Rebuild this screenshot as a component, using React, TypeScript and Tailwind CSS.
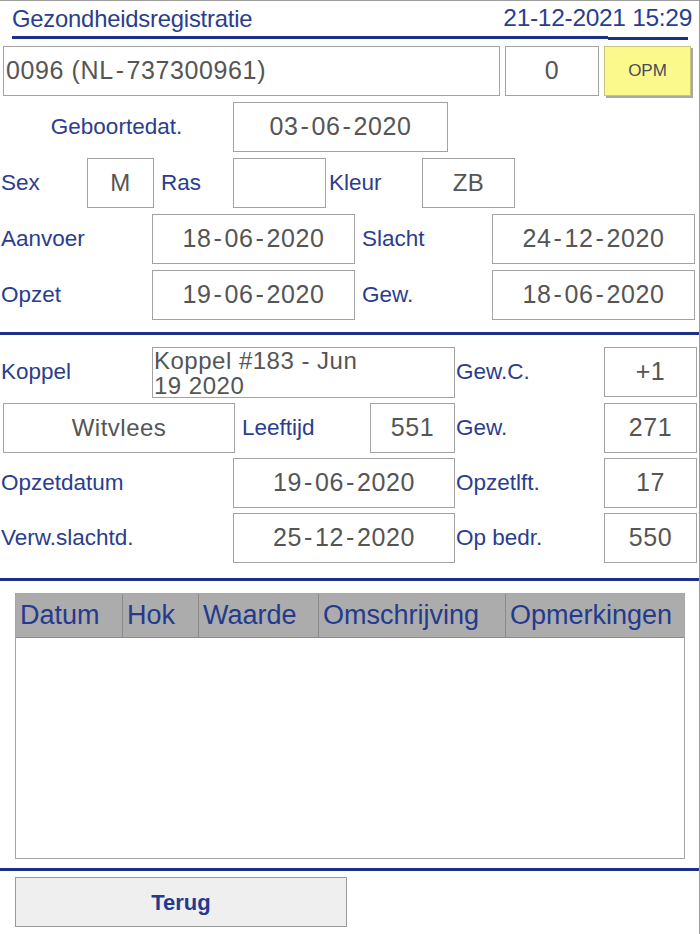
import React from "react";

const LABEL = "text-[22.5px] text-[#2b3d8e] whitespace-nowrap flex items-center h-[50px]";
const BOX =
  "h-[50px] border border-[#a3a3a3] bg-white flex items-center justify-center text-[#555555] whitespace-nowrap shrink-0";

function Val({ v }: { v: string }) {
  if (!v.includes("-")) return <>{v}</>;
  const parts = v.split("-");
  return (
    <>
      {parts.map((p, i) => (
        <React.Fragment key={i}>
          {i > 0 && <span className="mx-[2px]">-</span>}
          {p}
        </React.Fragment>
      ))}
    </>
  );
}

function Box({ w, v, extra = "" }: { w: string; v: string; extra?: string }) {
  const numeric = /\d/.test(v);
  const size = numeric ? "text-[25px] tracking-[0.6px]" : "text-[24px] tracking-[0.5px]";
  return (
    <div className={`${BOX} ${size} ${w} ${extra}`}>
      <Val v={v} />
    </div>
  );
}

function Label({ w, t, extra = "" }: { w: string; t: string; extra?: string }) {
  return <div className={`${LABEL} ${w} ${extra} shrink-0`}>{t}</div>;
}

function BlueLine({ extra = "" }: { extra?: string }) {
  return <div className={`h-[3px] bg-[#1b3088] ${extra}`} />;
}

export default function App() {
  return (
    <div className="w-[700px] h-[934px] bg-white border-t border-r border-[#9c9c9c] overflow-hidden flex flex-col font-['Liberation_Sans',Arial,sans-serif]">
      {/* Header */}
      <div className="h-[35px] flex items-center justify-between pl-[12px] pr-[7px]">
        <div className="text-[23.8px] text-[#2b3d8e] tracking-[-0.2px]">Gezondheidsregistratie</div>
        <div className="text-[24.5px] text-[#2b3d8e] tracking-[-0.3px]">21-12-2021 15:29</div>
      </div>
      <div className="flex ml-[12px]">
        <BlueLine extra="w-[596px]" />
        <BlueLine extra="w-[80px] mt-[1px]" />
      </div>

      {/* Section 1 */}
      <div className="mt-[6px] flex flex-col gap-[6px]">
        <div className="flex pl-[3px]">
          <Box w="w-[497px]" v="0096 (NL-737300961)" extra="!justify-start pl-[2px]" />
          <Box w="w-[94px] ml-[5px]" v="0" />
          <div className="ml-[5px] w-[87px] h-[50px] bg-[#fbf98c] border border-[#c8c67a] shadow-[2px_2px_0_#a8a8a8] flex items-center justify-center text-[17px] text-[#464c5c]">
            OPM
          </div>
        </div>
        <div className="flex">
          <Label w="w-[233px]" t="Geboortedat." extra="justify-center" />
          <Box w="w-[215px]" v="03-06-2020" />
        </div>
        <div className="flex">
          <Label w="w-[87px]" t="Sex" extra="pl-[1px]" />
          <Box w="w-[67px]" v="M" />
          <Label w="w-[79px]" t="Ras" extra="pl-[7px]" />
          <Box w="w-[93px]" v="" />
          <Label w="w-[96px]" t="Kleur" extra="pl-[3px]" />
          <Box w="w-[93px]" v="ZB" />
        </div>
        <div className="flex">
          <Label w="w-[152px]" t="Aanvoer" extra="pl-[1px]" />
          <Box w="w-[203px]" v="18-06-2020" />
          <Label w="w-[137px]" t="Slacht" extra="pl-[7px]" />
          <Box w="w-[203px]" v="24-12-2020" />
        </div>
        <div className="flex">
          <Label w="w-[152px]" t="Opzet" extra="pl-[1px]" />
          <Box w="w-[203px]" v="19-06-2020" />
          <Label w="w-[137px]" t="Gew." extra="pl-[7px]" />
          <Box w="w-[203px]" v="18-06-2020" />
        </div>
      </div>

      <BlueLine extra="mt-[12px] w-full" />

      {/* Section 2 */}
      <div className="mt-[12px] flex flex-col gap-[5px]">
        <div className="flex">
          <Label w="w-[152px]" t="Koppel" extra="pl-[1px]" />
          <div className="h-[51px] w-[303px] shrink-0 border border-[#a3a3a3] bg-white text-[24px] leading-[25px] text-[#555555] tracking-[0.5px] pl-[1px] overflow-hidden">
            Koppel #183 - Jun
            <br />
            19 2020
          </div>
          <Label w="w-[149px]" t="Gew.C." extra="pl-[1px]" />
          <Box w="w-[93px]" v="+1" />
        </div>
        <div className="flex pl-[3px]">
          <Box w="w-[232px]" v="Witvlees" />
          <Label w="w-[135px]" t="Leeftijd" extra="pl-[7px]" />
          <Box w="w-[85px]" v="551" />
          <Label w="w-[149px]" t="Gew." extra="pl-[1px]" />
          <Box w="w-[93px]" v="271" />
        </div>
        <div className="flex">
          <Label w="w-[233px]" t="Opzetdatum" extra="pl-[1px]" />
          <Box w="w-[222px]" v="19-06-2020" />
          <Label w="w-[149px]" t="Opzetlft." extra="pl-[1px]" />
          <Box w="w-[93px]" v="17" />
        </div>
        <div className="flex">
          <Label w="w-[233px]" t="Verw.slachtd." extra="pl-[1px]" />
          <Box w="w-[222px]" v="25-12-2020" />
          <Label w="w-[149px]" t="Op bedr." extra="pl-[1px]" />
          <Box w="w-[93px]" v="550" />
        </div>
      </div>

      <BlueLine extra="mt-[15px] w-full" />

      {/* Table */}
      <div className="mt-[12px] ml-[15px] w-[670px] h-[266px] border border-[#a6a6a6] flex flex-col">
        <div className="h-[44px] bg-[#acacac] flex text-[27px] text-[#243a8e] border-b border-[#8c8c8c]">
          <div className="w-[107px] border-r border-[#8a8a8a] flex items-center pl-[4px]">Datum</div>
          <div className="w-[76px] border-r border-[#8a8a8a] flex items-center pl-[4px]">Hok</div>
          <div className="w-[120px] border-r border-[#8a8a8a] flex items-center pl-[4px]">Waarde</div>
          <div className="w-[187px] border-r border-[#8a8a8a] flex items-center pl-[4px]">Omschrijving</div>
          <div className="flex-1 flex items-center pl-[4px]">Opmerkingen</div>
        </div>
        <div className="flex-1 bg-white" />
      </div>

      <BlueLine extra="mt-[9px] w-full" />

      <div className="mt-[6px] ml-[15px] w-[332px] h-[50px] bg-[#efefef] border border-[#9a9a9a] flex items-center justify-center text-[22px] font-bold text-[#243a8e]">
        Terug
      </div>
    </div>
  );
}
